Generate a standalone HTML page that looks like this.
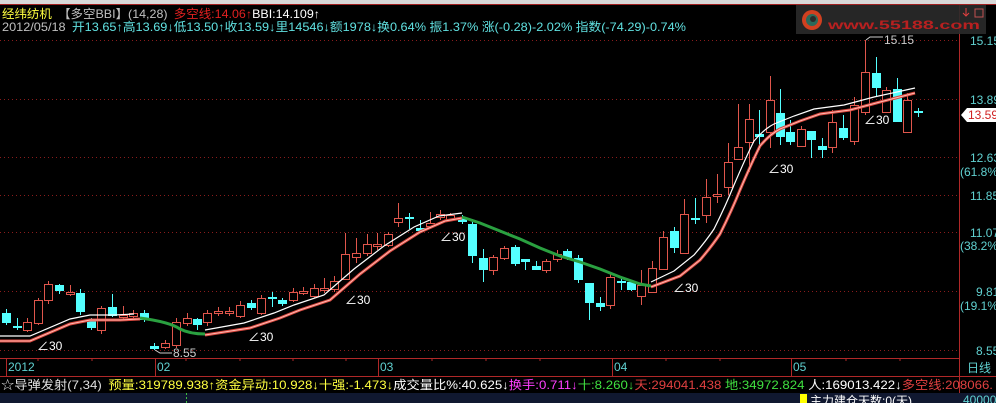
<!DOCTYPE html>
<html><head><meta charset="utf-8"><style>
html,body{margin:0;padding:0;background:#000;width:996px;height:403px;overflow:hidden}
svg{display:block}
text{font-family:"Liberation Sans","WenQuanYi Zen Hei","Noto Sans CJK SC",sans-serif;font-size:12px}
</style></head><body>
<svg width="996" height="403" viewBox="0 0 996 403" xmlns="http://www.w3.org/2000/svg">
<rect x="0" y="0" width="996" height="403" fill="#000"/>
<rect x="0" y="0" width="996" height="4" fill="#d8d8d8"/>
<rect x="0" y="4" width="996" height="1" fill="#a02020"/>
<g stroke="#8a1c1c" stroke-dasharray="1,3" stroke-width="1">
<line x1="0" y1="40.5" x2="958" y2="40.5"/><line x1="0" y1="99.5" x2="958" y2="99.5"/>
<line x1="0" y1="157.5" x2="958" y2="157.5"/><line x1="0" y1="195.5" x2="958" y2="195.5"/>
<line x1="0" y1="232.5" x2="958" y2="232.5"/><line x1="0" y1="291.5" x2="958" y2="291.5"/>
<line x1="0" y1="350.5" x2="958" y2="350.5"/></g>
<line x1="959.5" y1="5" x2="959.5" y2="393" stroke="#b02828"/>
<g stroke="#b02828"><line x1="0" y1="358.5" x2="959" y2="358.5"/><line x1="0" y1="376.5" x2="996" y2="376.5"/>
<line x1="6.5" y1="358" x2="6.5" y2="376"/><line x1="155.5" y1="358" x2="155.5" y2="376"/><line x1="378.5" y1="358" x2="378.5" y2="376"/><line x1="612.5" y1="358" x2="612.5" y2="376"/><line x1="791.5" y1="358" x2="791.5" y2="376"/>
<path d="M38 358v3M92 358v3M186 358v3M240 358v3M293 358v3M346 358v3M432 358v3M486 358v3M540 358v3M666 358v3M720 358v3M846 358v3M900 358v3"/></g>
<g fill="#60d0d0"><text x="8" y="371">2012</text><text x="157" y="371">02</text><text x="380" y="371">03</text><text x="614" y="371">04</text><text x="793" y="371">05</text></g>
<text x="967" y="372" fill="#60d0d0" font-size="13">日线</text>
<g fill="#60d0d0" font-size="12"><text x="970" y="45">15.15</text><text x="970" y="104">13.89</text><text x="970" y="162">12.63</text><text x="960" y="176">(61.8%)</text><text x="970" y="200">11.85</text><text x="970" y="237">11.07</text><text x="960" y="250">(38.2%)</text><text x="976" y="296">9.81</text><text x="960" y="310">(19.1%)</text><text x="976" y="355">8.55</text></g>
<path d="M961 115 L967 108 H996 V122 H967 Z" fill="#fff"/>
<text x="968" y="119" fill="#d02020" font-size="12">13.59</text>
<path stroke="#e0564c" stroke-width="1" fill="none" d="M27.5 318V332M38.5 298V325M48.5 281V304M70.5 285V296M101.5 306V334M123.5 306V320M133.5 310V318M165.5 340V349M176.5 318V348M187.5 313V326M207.5 310V326M218.5 307V316M229.5 307V316M240.5 301V318M261.5 295V315M293.5 288V302M303.5 287V295M314.5 284V298M324.5 278V293M334.5 276V292M345.5 233V280M356.5 238V263M367.5 234V256M377.5 233V250M388.5 232V247M398.5 203V227M430.5 212V229M440.5 210V220M450.5 213V221M493.5 255V275M504.5 246V260M546.5 259V273M557.5 250V262M610.5 273V309M641.5 270V305M652.5 261V293M663.5 231V270M684.5 199V253M706.5 179V223M717.5 174V203M728.5 143V195M738.5 104V160M749.5 104V172M770.5 76V148M801.5 126V147M832.5 110V153M854.5 97V145M865.5 40V115M886.5 87V112M907.5 93V132"/>
<path stroke="#54ffff" stroke-width="1" fill="none" d="M6.5 309V325M17.5 318V330M59.5 284V294M80.5 289V315M91.5 318V330M112.5 294V317M144.5 310V322M154.5 343V350M197.5 318V330M251.5 300V310M272.5 292V307M282.5 298V306M409.5 213V229M420.5 220V233M462.5 215V224M472.5 219V263M483.5 249V282M515.5 245V266M525.5 259V270M536.5 261V270M567.5 249V260M578.5 255V283M589.5 283V320M600.5 297V311M621.5 277V290M631.5 280V291M674.5 227V253M695.5 198V224M759.5 110V150M780.5 89V145M790.5 120V145M811.5 131V158M822.5 138V158M843.5 115V140M876.5 57V97M897.5 78V122M918.5 108V117"/>
<g fill="#000" stroke="#e0564c">
<rect x="23.5" y="322.5" width="8" height="8"/><rect x="34.5" y="300.5" width="8" height="23"/><rect x="44.5" y="284.5" width="8" height="16"/><rect x="66.5" y="292.5" width="8" height="2"/><rect x="97.5" y="308.5" width="8" height="22"/><rect x="119.5" y="315.5" width="8" height="2"/><rect x="129.5" y="313.5" width="8" height="3"/><rect x="161.5" y="343.5" width="8" height="4"/><rect x="172.5" y="322.5" width="8" height="23"/><rect x="183.5" y="318.5" width="8" height="5"/><rect x="203.5" y="313.5" width="8" height="9"/><rect x="214.5" y="311.5" width="8" height="2"/><rect x="225.5" y="311.5" width="8" height="2"/><rect x="236.5" y="305.5" width="8" height="11"/><rect x="257.5" y="298.5" width="8" height="15"/><rect x="289.5" y="292.5" width="8" height="8"/><rect x="299.5" y="291.5" width="8" height="2"/><rect x="310.5" y="288.5" width="8" height="8"/><rect x="320.5" y="288.5" width="8" height="2"/><rect x="330.5" y="281.5" width="8" height="8"/><rect x="341.5" y="254.5" width="8" height="25"/><rect x="352.5" y="253.5" width="8" height="4"/><rect x="363.5" y="244.5" width="8" height="9"/><rect x="373.5" y="244.5" width="8" height="2"/><rect x="384.5" y="234.5" width="8" height="11"/><rect x="394.5" y="218.5" width="8" height="4"/><rect x="426.5" y="223.5" width="8" height="3"/><rect x="436.5" y="214.5" width="8" height="3"/><rect x="446.5" y="215.5" width="8" height="4"/><rect x="489.5" y="257.5" width="8" height="13"/><rect x="500.5" y="248.5" width="8" height="10"/><rect x="542.5" y="261.5" width="8" height="9"/><rect x="553.5" y="254.5" width="8" height="5"/><rect x="606.5" y="277.5" width="8" height="28"/><rect x="637.5" y="285.5" width="8" height="11"/><rect x="648.5" y="268.5" width="8" height="24"/><rect x="659.5" y="237.5" width="8" height="32"/><rect x="680.5" y="214.5" width="8" height="39"/><rect x="702.5" y="197.5" width="8" height="18"/><rect x="713.5" y="194.5" width="8" height="2"/><rect x="724.5" y="162.5" width="8" height="25"/><rect x="734.5" y="147.5" width="8" height="12"/><rect x="745.5" y="119.5" width="8" height="23"/><rect x="766.5" y="100.5" width="8" height="32"/><rect x="797.5" y="129.5" width="8" height="17"/><rect x="828.5" y="122.5" width="8" height="25"/><rect x="850.5" y="105.5" width="8" height="36"/><rect x="861.5" y="72.5" width="8" height="40"/><rect x="882.5" y="90.5" width="8" height="22"/><rect x="903.5" y="100.5" width="8" height="32"/>
</g>
<g fill="#54ffff">
<rect x="2" y="313" width="9" height="10"/><rect x="13" y="326" width="9" height="2"/><rect x="55" y="285" width="9" height="6"/><rect x="76" y="293" width="9" height="19"/><rect x="87" y="321" width="9" height="7"/><rect x="108" y="307" width="9" height="9"/><rect x="140" y="313" width="9" height="7"/><rect x="150" y="346" width="9" height="3"/><rect x="193" y="319" width="9" height="6"/><rect x="247" y="303" width="9" height="5"/><rect x="268" y="297" width="9" height="2"/><rect x="278" y="300" width="9" height="4"/><rect x="405" y="217" width="9" height="2"/><rect x="416" y="228" width="9" height="3"/><rect x="458" y="219" width="9" height="3"/><rect x="468" y="224" width="9" height="32"/><rect x="479" y="258" width="9" height="12"/><rect x="511" y="247" width="9" height="17"/><rect x="521" y="259" width="9" height="3"/><rect x="532" y="266" width="9" height="4"/><rect x="563" y="251" width="9" height="7"/><rect x="574" y="258" width="9" height="22"/><rect x="585" y="283" width="9" height="20"/><rect x="596" y="303" width="9" height="4"/><rect x="617" y="281" width="9" height="2"/><rect x="627" y="282" width="9" height="8"/><rect x="670" y="231" width="9" height="17"/><rect x="691" y="218" width="9" height="2"/><rect x="755" y="134" width="9" height="3"/><rect x="776" y="113" width="9" height="24"/><rect x="786" y="132" width="9" height="10"/><rect x="807" y="131" width="9" height="9"/><rect x="818" y="146" width="9" height="4"/><rect x="839" y="128" width="9" height="10"/><rect x="872" y="73" width="9" height="15"/><rect x="893" y="89" width="9" height="33"/><rect x="914" y="111" width="9" height="2"/>
</g>
<g fill="none">
<g transform="translate(0,2)">
<path d="M0 339 L30 339 L70 322 L90 318 L120 318 L140 317 M205 333 L250 326 L280 316 L300 308 L330 298 L360 272 L390 249 L420 230 L445 219 L462 216 M651 285 L680 274 L700 258 Q712 244 720 232 Q732 208 740 188 Q752 160 760 144 Q770 132 780 127 L800 119 L820 112 L850 108 L880 100 L915 91" stroke="#d8483f" stroke-width="3"/>
<path d="M0 339 L30 339 L70 322 L90 318 L120 318 L140 317 M205 333 L250 326 L280 316 L300 308 L330 298 L360 272 L390 249 L420 230 L445 219 L462 216 M651 285 L680 274 L700 258 Q712 244 720 232 Q732 208 740 188 Q752 160 760 144 Q770 132 780 127 L800 119 L820 112 L850 108 L880 100 L915 91" stroke="#ffb8b0" stroke-width="1"/>
</g>
<path transform="translate(-6,-3)" d="M6 339 L36 339 L76 322 L96 318 L120 318 L140 317 M211 333 L250 326 L280 316 L300 308 L330 298 L360 272 L390 249 L420 230 L445 219 L468 216 M657 285 L680 274 L700 258 Q712 244 720 232 Q732 208 740 188 Q752 160 760 144 Q770 132 780 127 L800 119 L820 112 L850 108 L880 100 L921 91" stroke="#fff" stroke-width="1.2"/>
<path d="M140 318 Q170 322 180 329 Q190 334 205 334 M462 217 L480 223 L500 231 L520 239 L540 248 L560 256 L580 262 L600 269 L620 277 L640 284 L651 286" stroke="#2aa040" stroke-width="3"/>
</g>
<g fill="#fff" font-size="13"><text x="37" y="350">∠30</text><text x="248" y="341">∠30</text><text x="345" y="304">∠30</text><text x="440" y="241">∠30</text><text x="673" y="292">∠30</text><text x="768" y="173">∠30</text><text x="864" y="124">∠30</text></g>
<path d="M155 350 L160 353 H172 M866 40 L870 37 H883" stroke="#ccc" fill="none"/>
<text x="173" y="357" fill="#ccc">8.55</text><text x="884" y="44" fill="#ccc">15.15</text>
<rect x="796" y="5" width="190" height="29" fill="#2a2a2a" opacity="0.9"/>
<circle cx="812" cy="20" r="10" fill="#d04020"/><circle cx="812" cy="20" r="6" fill="#2a6a5a"/><circle cx="813" cy="19" r="3" fill="#2a2a2a"/>
<text x="828" y="29" fill="#b82020" font-size="22" font-weight="bold" textLength="152" lengthAdjust="spacingAndGlyphs">www.55188.com</text>
<rect x="975" y="9" width="8" height="8" fill="none" stroke="#c05050"/><path d="M966 8v8M963 13l3 3 3-3" stroke="#e04040" fill="none"/>
<text x="2" y="18" textLength="318" lengthAdjust="spacingAndGlyphs"><tspan fill="#ffff40">经纬纺机</tspan><tspan fill="#c0c0c0" dx="6">【多空BBI】(14,28)</tspan><tspan fill="#e02020" dx="6">多空线:14.06↑</tspan><tspan fill="#fff">BBI:14.109↑</tspan></text>
<text x="2" y="31" fill="#60e0e0" textLength="684" lengthAdjust="spacingAndGlyphs"><tspan fill="#c0c0c0">2012/05/18</tspan><tspan dx="6">开13.65↑高13.69↓低13.50↑收13.59↓里14546↓额1978↓换0.64% 振1.37% 涨(-0.28)-2.02% 指数(-74.29)-0.74%</tspan></text>
<text x="1" y="389" textLength="992" lengthAdjust="spacingAndGlyphs"><tspan fill="#e0e0e0">☆导弹发射(7,34)</tspan><tspan fill="#ffff40" dx="6">预量:319789.938↑资金异动:10.928↓十强:-1.473↓</tspan><tspan fill="#fff">成交量比%:40.625↓</tspan><tspan fill="#ff40ff">换手:0.711↓</tspan><tspan fill="#40e040">十:8.260↓</tspan><tspan fill="#e04040">天:294041.438 </tspan><tspan fill="#40e040">地:34972.824 </tspan><tspan fill="#fff">人:169013.422↓</tspan><tspan fill="#e04040">多空线:208066.</tspan></text>
<rect x="0" y="393" width="996" height="10" fill="#101830"/>
<line x1="186.5" y1="393" x2="186.5" y2="403" stroke="#40c040" stroke-dasharray="2,2"/>
<rect x="800" y="394" width="7" height="9" fill="#ffff00"/>
<text x="810" y="405" fill="#fff">主力建仓天数:0(天)</text>
<text x="963" y="404" fill="#60d0d0" font-size="11">4000000</text>
</svg>
</body></html>
